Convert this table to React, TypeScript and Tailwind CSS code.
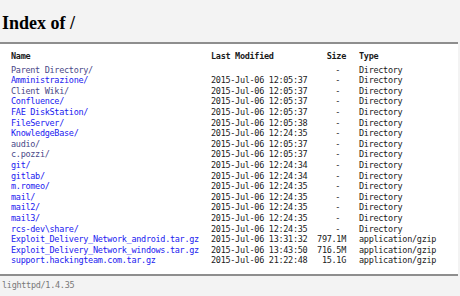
type Entry = {
  name: string;
  modified: string;
  size: string;
  type: string;
  visited?: boolean;
};

const dir = { size: "-", type: "Directory" };

const entries: Entry[] = [
  { name: "Parent Directory/", modified: "", ...dir, visited: true },
  { name: "Amministrazione/", modified: "2015-Jul-06 12:05:37", ...dir },
  { name: "Client Wiki/", modified: "2015-Jul-06 12:05:37", ...dir, visited: true },
  { name: "Confluence/", modified: "2015-Jul-06 12:05:37", ...dir },
  { name: "FAE DiskStation/", modified: "2015-Jul-06 12:05:37", ...dir },
  { name: "FileServer/", modified: "2015-Jul-06 12:05:38", ...dir },
  { name: "KnowledgeBase/", modified: "2015-Jul-06 12:24:35", ...dir },
  { name: "audio/", modified: "2015-Jul-06 12:05:37", ...dir, visited: true },
  { name: "c.pozzi/", modified: "2015-Jul-06 12:05:37", ...dir, visited: true },
  { name: "git/", modified: "2015-Jul-06 12:24:34", ...dir },
  { name: "gitlab/", modified: "2015-Jul-06 12:24:34", ...dir },
  { name: "m.romeo/", modified: "2015-Jul-06 12:24:35", ...dir },
  { name: "mail/", modified: "2015-Jul-06 12:24:35", ...dir },
  { name: "mail2/", modified: "2015-Jul-06 12:24:35", ...dir },
  { name: "mail3/", modified: "2015-Jul-06 12:24:35", ...dir },
  { name: "rcs-dev\\share/", modified: "2015-Jul-06 12:24:35", ...dir },
  { name: "Exploit_Delivery_Network_android.tar.gz", modified: "2015-Jul-06 13:31:32", size: "797.1M", type: "application/gzip" },
  { name: "Exploit_Delivery_Network_windows.tar.gz", modified: "2015-Jul-06 13:43:50", size: "716.5M", type: "application/gzip" },
  { name: "support.hackingteam.com.tar.gz", modified: "2015-Jul-06 21:22:48", size: "15.1G", type: "application/gzip" },
];

const mono =
  "font-['DejaVu_Sans_Mono','Liberation_Mono',monospace] text-[8.5px] tracking-[-0.3px] leading-[10.6px] whitespace-nowrap";

export default function App() {
  return (
    <div className="flex h-[296px] w-[460px] flex-col overflow-hidden bg-[#f3f3f3]">
      <header className="h-[42px] px-[2px] pt-[14px]">
        <h2 className="font-['Liberation_Serif',serif] text-[18px] font-bold leading-[18px] text-black">Index of /</h2>
      </header>

      <div className="mr-[2px] border-t-2 border-b-2 border-[#8e8e8e] bg-white pb-[8px] pl-[11px] pt-[7px]">
        <div className={`grid grid-cols-[200px_98px_37px_1fr] text-[#1a1a1a] ${mono}`}>
          <div className="pb-[3px] font-bold">Name</div>
          <div className="pb-[3px] font-bold">Last Modified</div>
          <div className="pb-[3px] text-right font-bold">Size</div>
          <div className="pb-[3px] pl-[13px] font-bold">Type</div>
          {entries.map((e) => (
            <div key={e.name} className="contents">
              <a href="#" className={e.visited ? "text-[#4a4888]" : "text-[#2020f0]"}>
                {e.name}
              </a>
              <div>{e.modified}</div>
              <div className={e.size === "-" ? "pr-[6px] text-right" : "text-right"}>{e.size}</div>
              <div className="pl-[13px]">{e.type}</div>
            </div>
          ))}
        </div>
      </div>

      <footer className={`px-[2px] pt-[4px] text-[#787878] ${mono}`}>lighttpd/1.4.35</footer>
    </div>
  );
}
